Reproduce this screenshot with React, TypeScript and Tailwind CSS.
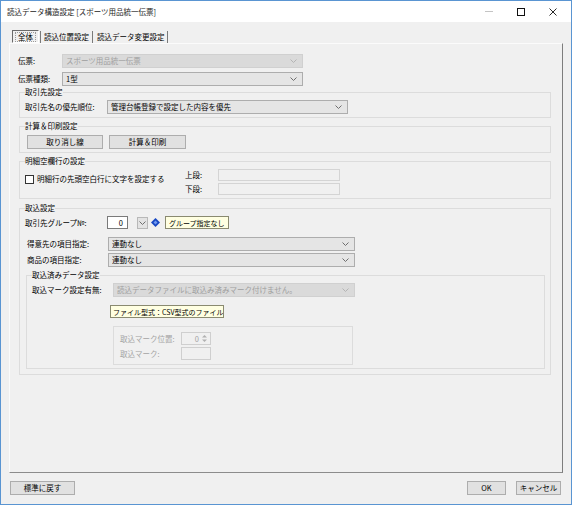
import React from 'react';
import clsx from 'clsx';

function Chevron({ dim }: { dim?: boolean }) {
  return (
    <svg width="7" height="4" viewBox="0 0 7 4" className="shrink-0">
      <polyline points="0.5,0.5 3.5,3.5 6.5,0.5" fill="none" stroke={dim ? '#b4b4b4' : '#6e6e6e'} strokeWidth="1" />
    </svg>
  );
}

function Combo({ value, className, disabled }: { value: string; className?: string; disabled?: boolean }) {
  return (
    <div
      className={clsx(
        'flex h-[14px] shrink-0 items-center justify-between border pl-[3px] pr-[5px]',
        disabled ? 'border-[#d0d0d0] bg-[#dadada] text-[#9e9e9e]' : 'border-[#adadad] bg-[#e5e5e5] text-black',
        className,
      )}
    >
      <span className="truncate">{value}</span>
      <Chevron dim={disabled} />
    </div>
  );
}

function Btn({ children, className }: { children: React.ReactNode; className?: string }) {
  return (
    <div className={clsx('flex h-[14px] items-center justify-center border border-[#adadad] bg-[#e1e1e1]', className)}>
      {children}
    </div>
  );
}

function Spin({ dim }: { dim?: boolean }) {
  const c = dim ? '#b0b0b0' : '#555';
  return (
    <svg width="5" height="7" viewBox="0 0 5 7" className="shrink-0">
      <polygon points="2.5,0 5,2.5 0,2.5" fill={c} />
      <polygon points="0,4.5 5,4.5 2.5,7" fill={c} />
    </svg>
  );
}

function Group({ title, children, className }: { title?: string; children: React.ReactNode; className?: string }) {
  return (
    <fieldset className={clsx('min-w-0 border border-[#dcdcdc] px-[5px]', className)}>
      {title && <legend className="px-0 leading-[10px]">{title}</legend>}
      {children}
    </fieldset>
  );
}

export default function App() {
  return (
    <div className="flex h-[505px] w-[572px] flex-col overflow-hidden border border-[#5a95d2] bg-[#f0f0f0] font-['Noto_Sans_CJK_JP','Noto_Sans',sans-serif] text-[7.5px] leading-[10px] text-black">
      {/* title bar */}
      <div className="flex h-[21px] shrink-0 items-center justify-between bg-white">
        <span className="pl-[6px] text-[#1a1a1a]">読込データ構造設定 [スポーツ用品統一伝票]</span>
        <div className="flex h-full items-center pr-[2px]">
          <span className="flex w-[32px] justify-center">
            <svg width="8" height="1" viewBox="0 0 8 1"><rect width="8" height="1" fill="#c4c4c4" /></svg>
          </span>
          <span className="flex w-[32px] justify-center">
            <svg width="8" height="8" viewBox="0 0 8 8"><rect x="0.5" y="0.5" width="7" height="7" fill="none" stroke="#111" /></svg>
          </span>
          <span className="flex w-[32px] justify-center">
            <svg width="8" height="8" viewBox="0 0 8 8"><path d="M0.5 0.5L7.5 7.5M7.5 0.5L0.5 7.5" stroke="#111" strokeWidth="0.9" /></svg>
          </span>
        </div>
      </div>

      {/* tabs */}
      <div className="mt-[8px] ml-[11px] flex h-[13px] shrink-0 items-center">
        <div className="flex h-[13px] w-[27px] items-center justify-center border border-t-[#6a6a6a] border-l-[#6a6a6a] border-r-white border-b-white">
          <span className="border border-dotted border-[#9a9a9a] px-[2px] leading-[8px]">全体</span>
        </div>
        <span className="ml-[1px] h-[12px] w-px bg-[#7a7a7a]" />
        <span className="pl-[3px] pr-[3px]">読込位置設定</span>
        <span className="h-[12px] w-px bg-[#7a7a7a]" />
        <span className="pl-[4px] pr-[2px]">読込データ変更設定</span>
        <span className="h-[12px] w-px bg-[#7a7a7a]" />
      </div>

      {/* tab page */}
      <div className="mx-[8px] flex h-[430px] shrink-0 flex-col border border-t-[#fbfbfb] border-l-[#fbfbfb] border-r-[#7d7d7d] border-b-[#8c8c8c] pt-[10px] pl-[8px]">
        <div className="flex items-center">
          <span className="w-[44px]">伝票:</span>
          <Combo value="スポーツ用品統一伝票" disabled className="w-[241px]" />
        </div>
        <div className="mt-[4px] flex items-center">
          <span className="w-[44px]">伝票種類:</span>
          <Combo value="1型" className="w-[241px]" />
        </div>

        <Group title="取引先設定" className="mt-[1px] ml-px w-[532px] pb-[3px]">
          <div className="mt-[3px] flex items-center">
            <span className="w-[82px]">取引先名の優先順位:</span>
            <Combo value="管理台帳登録で設定した内容を優先" className="w-[241px]" />
          </div>
        </Group>

        <Group title="計算＆印刷設定" className="mt-[3px] ml-px w-[532px] pb-[3px]">
          <div className="mt-[4px] flex gap-[6px] pl-[2px]">
            <Btn className="w-[76px]">取り消し線</Btn>
            <Btn className="w-[77px]">計算＆印刷</Btn>
          </div>
        </Group>

        <Group title="明細空欄行の設定" className="mt-[3px] ml-px w-[532px] pb-[3px]">
          <div className="mt-[3px] flex">
            <div className="flex w-[160px] items-center self-start pt-[5px]">
              <span className="h-[9px] w-[9px] border border-[#333] bg-white" />
              <span className="pl-[3px]">明細行の先頭空白行に文字を設定する</span>
            </div>
            <div className="grid grid-cols-[33px_122px] items-center gap-y-[2px]">
              <span>上段:</span>
              <span className="h-[12px] border border-[#d4d4d4] bg-[#f0f0f0]" />
              <span>下段:</span>
              <span className="h-[12px] border border-[#d4d4d4] bg-[#f0f0f0]" />
            </div>
          </div>
        </Group>

        <Group title="取込設定" className="mt-[4px] ml-px w-[532px] pb-[5px]">
          <div className="mt-[3px] flex items-center">
            <span className="w-[82px]">取引先グループ№:</span>
            <span className="flex h-[13px] w-[21px] items-center justify-end border border-[#7a7a7a] bg-white pr-[4px]">0</span>
            <span className="ml-[9px] flex h-[12px] w-[11px] items-center justify-center border border-[#b8b8b8] bg-[#e3e3e3]">
              <Chevron />
            </span>
            <svg width="9" height="9" viewBox="0 0 9 9" className="ml-[3px]">
              <polygon points="4.5,0 9,4.5 4.5,9 0,4.5" fill="#1747c2" />
              <polygon points="4.5,2.5 6.5,4.5 4.5,6.5 2.5,4.5" fill="#6f98f0" />
            </svg>
            <span className="ml-[5px] flex h-[13px] w-[64px] items-center overflow-hidden whitespace-nowrap border border-[#8a8a70] bg-[#ffffe1] pl-[3px] text-[7px]">
              グループ指定なし
            </span>
          </div>
          <div className="mt-[8px] flex items-center pl-[2px]">
            <span className="w-[81px]">得意先の項目指定:</span>
            <Combo value="連動なし" className="w-[247px]" />
          </div>
          <div className="mt-[2px] flex items-center pl-[2px]">
            <span className="w-[81px]">商品の項目指定:</span>
            <Combo value="連動なし" className="w-[247px]" />
          </div>

          <Group title="取込済みデータ設定" className="mt-[3px] ml-px pb-[3px]">
            <div className="mt-[3px] flex items-center">
              <span className="w-[81px]">取込マーク設定有無:</span>
              <Combo value="読込データファイルに取込み済みマーク付けません。" disabled className="w-[242px]" />
            </div>
            <span className="mt-[8px] ml-[78px] flex h-[13px] w-[114px] items-center overflow-hidden whitespace-nowrap border border-[#8a8a70] bg-[#ffffe1] pl-[2px] text-[7px]">
              ファイル型式：CSV型式のファイル
            </span>
            <div className="mt-[8px] ml-[81px] w-[240px] border border-[#dcdcdc] pt-[5px] pb-[4px] pl-[6px] text-[#a4a4a4]">
              <div className="flex items-center">
                <span className="w-[61px]">取込マーク位置:</span>
                <span className="flex h-[13px] w-[30px] items-center justify-end gap-[3px] border border-[#cfcfcf] pr-[3px]">
                  0<Spin dim />
                </span>
              </div>
              <div className="mt-[2px] flex items-center">
                <span className="w-[61px]">取込マーク:</span>
                <span className="h-[13px] w-[30px] border border-[#cfcfcf]" />
              </div>
            </div>
          </Group>
        </Group>
      </div>

      {/* footer buttons */}
      <div className="mt-[8px] flex items-center pl-[9px] pr-[10px]">
        <Btn className="w-[65px]">標準に戻す</Btn>
        <div className="flex-1" />
        <Btn className="w-[39px]">OK</Btn>
        <Btn className="ml-[10px] w-[45px]">キャンセル</Btn>
      </div>
    </div>
  );
}
